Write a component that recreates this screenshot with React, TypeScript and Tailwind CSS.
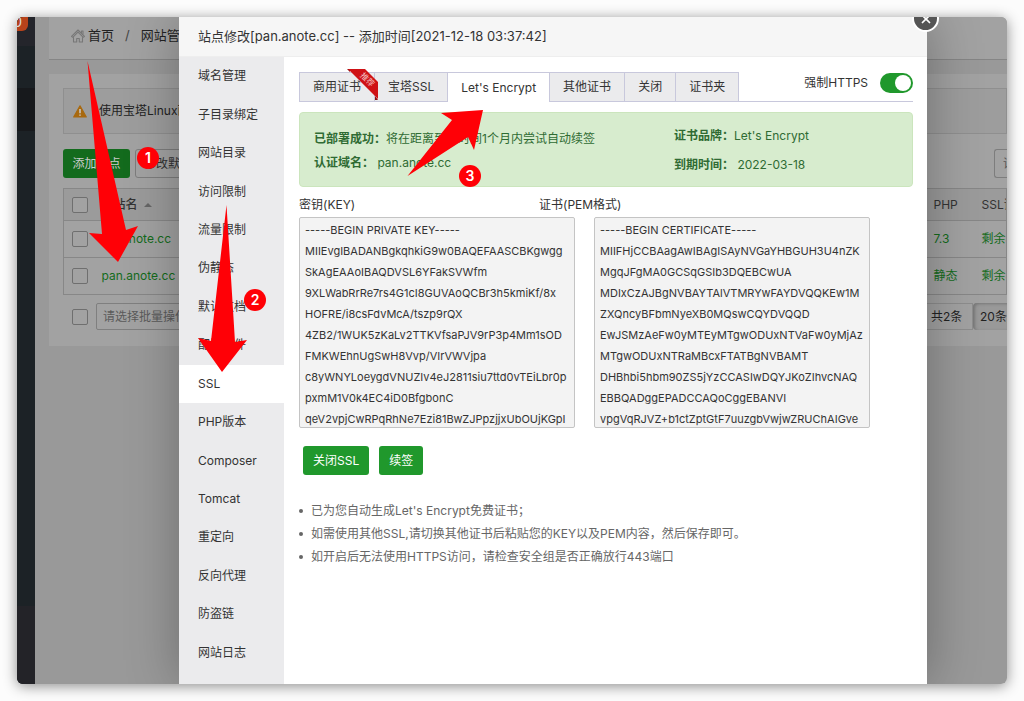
import { useState } from "react";
import { X } from "lucide-react";

const MENU = [
  "域名管理",
  "子目录绑定",
  "网站目录",
  "访问限制",
  "流量限制",
  "伪静态",
  "默认文档",
  "配置文件",
  "SSL",
  "PHP版本",
  "Composer",
  "Tomcat",
  "重定向",
  "反向代理",
  "防盗链",
  "网站日志",
];

const TABS = ["商用证书", "宝塔SSL", "Let's Encrypt", "其他证书", "关闭", "证书夹"];

const PRIVATE_KEY = `-----BEGIN PRIVATE KEY-----
MIIEvgIBADANBgkqhkiG9w0BAQEFAASCBKgwgg
SkAgEAAoIBAQDVSL6YFakSVWfm
9XLWabRrRe7rs4G1cI8GUVAoQCBr3h5kmiKf/8x
HOFRE/i8csFdvMcA/tszp9rQX
4ZB2/1WUK5zKaLv2TTKVfsaPJV9rP3p4Mm1sOD
FMKWEhnUgSwH8Vvp/VIrVWVjpa
c8yWNYLoeygdVNUZIv4eJ2811siu7ttd0vTEiLbr0p
pxmM1V0k4EC4iD0BfgbonC
qeV2vpjCwRPqRhNe7Ezi81BwZJPpzjjxUbOUjKGpI`;

const CERTIFICATE = `-----BEGIN CERTIFICATE-----
MIIFHjCCBAagAwIBAgISAyNVGaYHBGUH3U4nZK
MgqJFgMA0GCSqGSIb3DQEBCwUA
MDIxCzAJBgNVBAYTAlVTMRYwFAYDVQQKEw1M
ZXQncyBFbmNyeXB0MQswCQYDVQQD
EwJSMzAeFw0yMTEyMTgwODUxNTVaFw0yMjAz
MTgwODUxNTRaMBcxFTATBgNVBAMT
DHBhbi5hbm90ZS5jYzCCASIwDQYJKoZIhvcNAQ
EBBQADggEPADCCAQoCggEBANVI
vpgVqRJVZ+b1ctZptGtF7uuzgbVwjwZRUChAIGve`;

const TIPS = [
  "已为您自动生成Let's Encrypt免费证书；",
  "如需使用其他SSL,请切换其他证书后粘贴您的KEY以及PEM内容，然后保存即可。",
  "如开启后无法使用HTTPS访问，请检查安全组是否正确放行443端口",
];

function Checkbox({ label }: { label: string }) {
  return (
    <input
      type="checkbox"
      aria-label={label}
      className="block size-4 shrink-0 appearance-none rounded-xs border border-[#6f6f6f] bg-[#a2a2a2]"
    />
  );
}

function SiteRow({ name, php }: { name: string; php: string }) {
  return (
    <tr className="h-[37px] border-t border-[#878787] text-[#146b1c]">
      <td className="pl-2">
        <Checkbox label={name} />
      </td>
      <td className="pl-1">
        <a href="#site">{name}</a>
      </td>
      <td className="pl-2">
        <a href="#php">{php}</a>
      </td>
      <td className="overflow-hidden pl-2">
        <a href="#ssl">剩余89天</a>
      </td>
    </tr>
  );
}

function SitesPage() {
  return (
    <div className="flex flex-1 bg-[#999] text-xs whitespace-nowrap text-[#222]">
      <nav className="flex w-[18px] shrink-0 flex-col overflow-hidden bg-[#1c2226]">
        <div className="h-[29px] bg-[#24252b]">
          <span className="-ml-2 flex h-[14px] w-[19px] items-center justify-end rounded-br-md bg-[#b8431b] pr-1.5 pb-1 text-sm text-[#ddd]">
            0
          </span>
        </div>
        <div className="mt-[42px] h-[43px] bg-[#17191c]" />
        <div className="mt-auto h-[78px] bg-[#232328]" />
      </nav>

      <div className="flex min-w-0 flex-1 flex-col gap-[14px] overflow-hidden pl-[14px]">
        <header className="flex h-[43px] items-center border-b border-[#858585] bg-[#a2a2a2] pb-1 pl-[21px] text-[13px]">
          <svg viewBox="0 0 16 16" className="mr-0.5 size-4" fill="none" stroke="#777" strokeWidth="1.1" strokeLinejoin="round" strokeLinecap="round">
            <path d="M1.5 8.3 8 2l6.500 6.300-1.200 1L8 4.200 2.700 9.300z" />
            <path d="M3.500 9.500V14h3.200v-3.500h2.600V14h3.200V9.500M11.500 4.500V3h1.500v3" />
          </svg>
          <a href="#home">首页</a>
          <span className="mx-[11px] text-[#444]">/</span>
          <a href="#sites">网站管理</a>
        </header>

        <main className="bg-[#a2a2a2] pt-[14px] pb-4 pl-[14px]">
          <div className="flex h-[46px] items-center gap-3 border border-[#8f8f8f] bg-[#9d9d9d] pl-[9px]">
            <svg viewBox="0 0 14 13" className="h-[13px] w-[14px]">
              <path d="M7 .8 13.300 12H.7z" fill="#a8690f" stroke="#a8690f" strokeWidth="1.2" strokeLinejoin="round" />
              <path d="M7 4v4.200M7 9.500v1.300" stroke="#ccc" strokeWidth="1.500" />
            </svg>
            使用宝塔Linux面板创建站点时会自动创建权限
          </div>

          <div className="mt-[15px] flex h-[29px] gap-[5px]">
            <button className="w-[67px] rounded-[3px] bg-[#136b1d] text-[#ccc]">添加站点</button>
            <button className="rounded-[3px] border border-[#7d7d7d] px-2 text-[#333]">修改默认页</button>
            <input
              aria-label="搜索"
              placeholder="请输入域名"
              className="ml-auto w-[13px] rounded-l-[3px] border border-r-0 border-[#7d7d7d] pl-2 placeholder:text-[#555]"
            />
          </div>

          <table className="mt-[10px] w-full table-fixed border border-[#878787] text-left">
            <thead>
              <tr className="h-8 bg-[#9b9b9b] text-[#333]">
                <th className="w-[34px] pl-2">
                  <Checkbox label="全选" />
                </th>
                <th className="pl-1 font-medium">
                  <span className="flex items-center gap-1.5">
                    网站名
                    <span className="border-x-4 border-b-4 border-x-transparent border-b-[#666]" />
                  </span>
                </th>
                <th className="w-12 pl-2 font-normal">PHP</th>
                <th className="w-[33px] overflow-hidden pl-2 font-normal">SSL证书</th>
              </tr>
            </thead>
            <tbody>
              <SiteRow name="pic.anote.cc" php="7.3" />
              <SiteRow name="pan.anote.cc" php="静态" />
            </tbody>
          </table>

          <div className="mt-2 flex h-[27px] items-center pl-[9px]">
            <Checkbox label="选择全部站点" />
            <select
              aria-label="批量操作"
              className="ml-2 h-full w-36 appearance-none rounded-xs border border-[#7f7f7f] pl-1.5 text-[#5a5a5a]"
            >
              <option>请选择批量操作</option>
            </select>
            <span className="ml-auto flex h-full w-[46px] items-center border border-l-0 border-[#8d8d8d] pl-1">
              共2条
            </span>
            <select
              aria-label="每页条数"
              className="h-full w-[34px] appearance-none rounded-l-sm bg-[#999] pl-[7px] shadow-[inset_2px_1px_3px_#777]"
            >
              <option>20条/页</option>
            </select>
          </div>
        </main>
      </div>
    </div>
  );
}

function Ribbon() {
  return (
    <svg viewBox="0 0 31 31" className="absolute -top-1 -right-1 z-10 size-[31px]">
      <path d="M0 0h3v3zM31 31h-3v-4z" fill="#8f0c0f" />
      <path d="M1 0h17l13 13v17z" fill="#cf1216" />
      <text x="0" y="0" transform="translate(20.500 10.500) rotate(45)" textAnchor="middle" dominantBaseline="central" fontSize="8" fill="#f5c9c9">
        推荐
      </text>
    </svg>
  );
}

function CertTabs() {
  const [active, setActive] = useState("Let's Encrypt");
  return (
    <div className="flex h-[30px]">
      <div role="tablist" className="flex border-l border-[#c8c8dc]">
        {TABS.map((tab) => (
          <button
            key={tab}
            role="tab"
            aria-selected={tab === active}
            onClick={() => setActive(tab)}
            className={
              tab === active
                ? "relative border-t border-r border-[#c8c8dc] bg-white px-[13px]"
                : "relative border border-l-0 border-[#c8c8dc] bg-[#ebebed] px-[13px]"
            }
          >
            {tab}
            {tab === "商用证书" && <Ribbon />}
          </button>
        ))}
      </div>
      <label className="flex flex-1 items-center justify-end gap-3 border-b border-[#c8c8dc] pb-2">
        强制HTTPS
        <input
          type="checkbox"
          defaultChecked
          className="h-5 w-[33px] appearance-none rounded-full bg-gray-300 p-0.5 before:block before:size-4 before:rounded-full before:bg-white checked:bg-[#20982c] checked:before:ml-auto"
        />
      </label>
    </div>
  );
}

function SiteDialog() {
  return (
    <div
      role="dialog"
      aria-label="站点修改"
      className="absolute inset-y-0 right-20 left-[162px] flex flex-col bg-white text-xs text-[#333] shadow-[1px_1px_50px_rgba(0,0,0,0.3)]"
    >
      <button
        aria-label="关闭窗口"
        className="absolute -top-[12px] -right-[12px] flex size-[27px] items-center justify-center rounded-full border-2 border-white bg-[#555] text-white"
      >
        <X size={14} strokeWidth={3} />
      </button>
      <h1 className="flex h-10 items-center border-b border-[#eee] bg-[#f6f6f6] pl-[19px] text-[13px]">
        站点修改[pan.anote.cc] -- 添加时间[2021-12-18 03:37:42]
      </h1>

      <div className="flex flex-1">
        <nav className="flex w-[105px] shrink-0 flex-col bg-[#ebebed] pb-3">
          {MENU.map((item) => (
            <a
              key={item}
              href={`#${item}`}
              className={
                item === "SSL"
                  ? "flex flex-1 items-center bg-white pl-[19px]"
                  : "flex flex-1 items-center pl-[19px]"
              }
            >
              {item}
            </a>
          ))}
        </nav>

        <section className="min-w-0 flex-1 pt-[15px] pr-[14px] pl-[15px]">
          <CertTabs />

          <div className="mt-[10px] flex h-[75px] rounded-sm border border-[#cbe5bd] bg-[#d7ecce] pl-[14px] text-[#2f6b33]">
            <div className="flex w-[360px] flex-col pt-[14px] leading-6">
              <p><b>已部署成功：</b>将在距离到期时间1个月内尝试自动续签</p>
              <p><b>认证域名：</b> pan.anote.cc</p>
            </div>
            <div className="flex flex-col pt-2 leading-[29px]">
              <p><b>证书品牌：</b>Let's Encrypt</p>
              <p><b>到期时间：</b> 2022-03-18</p>
            </div>
          </div>

          <div className="mt-[6px] flex leading-6">
            <label htmlFor="key" className="w-[240px]">密钥(KEY)</label>
            <label htmlFor="pem">证书(PEM格式)</label>
          </div>
          <div className="flex gap-[19px]">
            <textarea
              id="key"
              readOnly
              defaultValue={PRIVATE_KEY}
              className="h-[211px] w-[276px] resize-none overflow-hidden rounded-xs border border-[#c4c4c4] bg-[#f3f3f3] px-[5px] py-[2px] text-[11px] leading-[21px] whitespace-pre"
            />
            <textarea
              id="pem"
              readOnly
              defaultValue={CERTIFICATE}
              className="h-[211px] w-[276px] resize-none overflow-hidden rounded-xs border border-[#c4c4c4] bg-[#f3f3f3] px-[5px] py-[2px] text-[11px] leading-[21px] whitespace-pre"
            />
          </div>

          <div className="mt-[18px] flex h-[29px] gap-[10px] pl-1 text-white">
            <button className="rounded-[3px] bg-[#20982c] px-[10px]">关闭SSL</button>
            <button className="rounded-[3px] bg-[#20982c] px-[10px]">续签</button>
          </div>

          <ul className="mt-6 leading-[23px] text-[#666]">
            {TIPS.map((tip) => (
              <li key={tip} className="flex items-center gap-2">
                <span className="size-1 rounded-full bg-[#666]" />
                {tip}
              </li>
            ))}
          </ul>
        </section>
      </div>
    </div>
  );
}

// Red arrows with numbered steps, drawn above everything else
function Steps() {
  return (
    <div className="pointer-events-none absolute top-0 left-0 text-sm font-semibold text-white">
      <svg width="500" height="380" fill="#ff0006">
        <path d="M87.500 61 126 230l12-4-20 36-29-29 13 1z" />
        <path d="M226.500 205 235 342l12-2-25 32-24-34 13 3z" />
        <path d="M407.500 176 452 120l-11-7 42-3-9 40-6-13z" />
      </svg>
      <span className="absolute top-[147px] left-[137px] flex size-[22px] items-center justify-center rounded-full bg-[#ff0006]">1</span>
      <span className="absolute top-[289px] left-[244px] flex size-[22px] items-center justify-center rounded-full bg-[#ff0006]">2</span>
      <span className="absolute top-[165px] left-[459px] flex size-[22px] items-center justify-center rounded-full bg-[#ff0006]">3</span>
    </div>
  );
}

export default function App() {
  return (
    <div className="relative flex min-h-screen bg-[#fcfcfc] p-[17px] font-[Inter,'Noto_Sans_CJK_SC',sans-serif]">
      <div className="relative flex flex-1 overflow-hidden rounded-md shadow-[0_2px_14px_rgba(0,0,0,0.45)]">
        <SitesPage />
        <SiteDialog />
      </div>
      <Steps />
    </div>
  );
}
